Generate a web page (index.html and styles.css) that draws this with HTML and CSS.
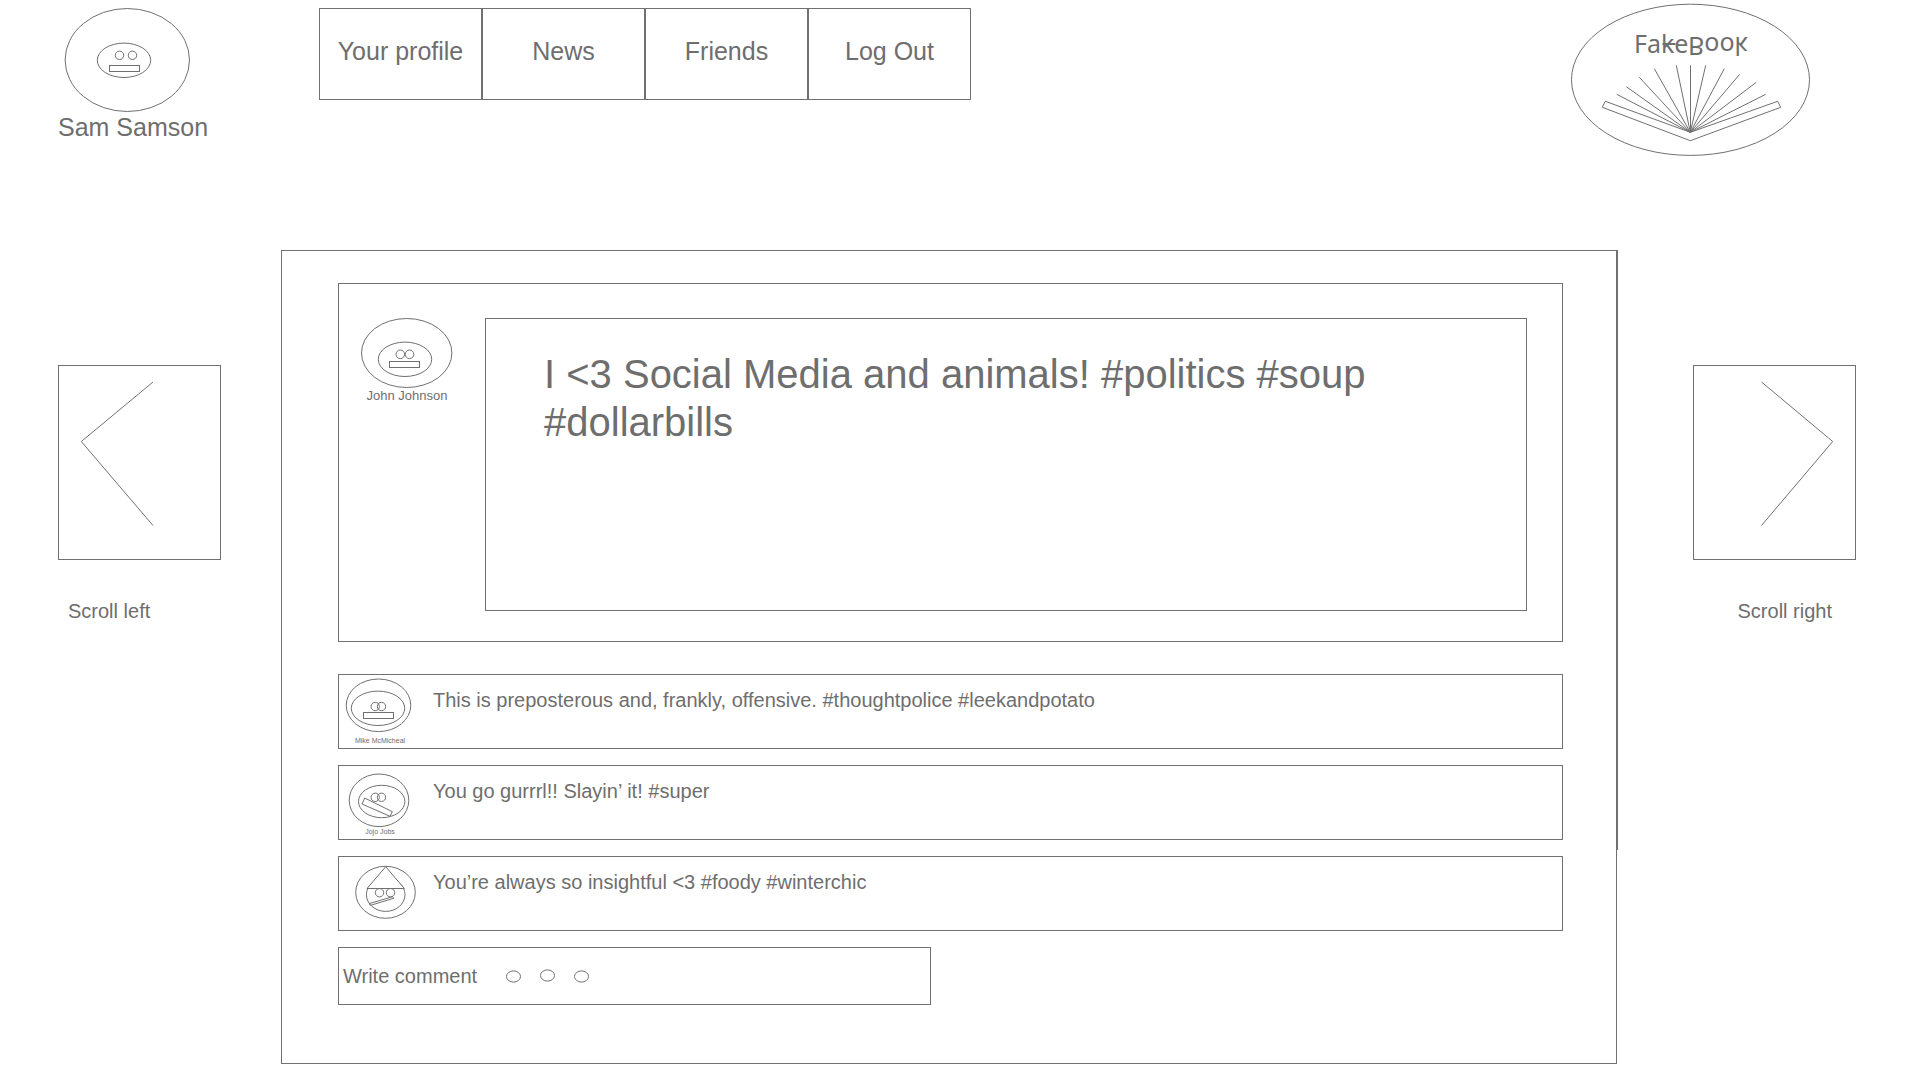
FILE: index.html
```html
<!DOCTYPE html>
<html lang="en">
<head>
<meta charset="utf-8">
<meta name="viewport" content="width=device-width, initial-scale=1">
<title>FakeBook</title>
<link rel="stylesheet" href="styles.css">
</head>
<body>
<header class="header">
  <div class="profile">
    <svg class="drawing" width="140" height="104" viewBox="0 0 140 104" aria-hidden="true">
      <ellipse cx="69.3" cy="52" rx="62.2" ry="51.5"/>
      <ellipse cx="66" cy="52.3" rx="26.7" ry="17.2"/>
      <circle cx="61.5" cy="47.3" r="4.2"/>
      <circle cx="74.5" cy="47.3" r="4.2"/>
      <rect x="51.5" y="57.5" width="30" height="6"/>
    </svg>
    <span class="profile-name">Sam Samson</span>
  </div>
  <nav class="nav">
    <a class="nav-link" href="#profile">Your profile</a>
    <a class="nav-link" href="#news">News</a>
    <a class="nav-link" href="#friends">Friends</a>
    <a class="nav-link" href="#logout">Log Out</a>
  </nav>
  <a class="logo" href="#home" aria-label="FakeBook">
    <svg class="drawing" width="242" height="160" viewBox="0 0 242 160" aria-hidden="true">
      <ellipse cx="120.5" cy="79.8" rx="119" ry="75.6"/>
      <text class="logo-text" x="64" y="53">Fake</text>
      <path class="logo-strike" d="M92.5 44h13"/>
      <text class="logo-text" x="118" y="-37" transform="scale(1 -1)">Book</text>
      <path d="M120.3 132.3L46.7 94.3M120.3 132.3L56.3 86.7M120.3 132.3L69.3 77.3M120.3 132.3L84.3 68.7M120.3 132.3L106.3 65.3M120.5 132.3V65.3M120.3 132.3L135.7 65.3M120.3 132.3L154.3 68.7M120.3 132.3L169.7 74.3M120.3 132.3L186.3 82.3M120.3 132.3L195.7 94.3"/>
      <path d="M35.3 101.3L32.3 107.3L120.3 140.7L210.7 107.3L207.7 101.3L120.3 132.3Z"/>
    </svg>
  </a>
</header>

<main class="page">
  <div class="scroll">
    <button class="scroll-button" type="button" aria-labelledby="scroll-left">
      <svg class="drawing" width="161" height="193" viewBox="0 0 161 193" aria-hidden="true"><path d="M94 16L22.3 75.5L94 159.5"/></svg>
    </button>
    <span class="scroll-label" id="scroll-left">Scroll left</span>
  </div>

  <section class="feed">
    <article class="post">
      <div class="post-author">
        <svg class="drawing" width="94" height="70" viewBox="0 0 94 70" aria-hidden="true">
          <ellipse cx="46.7" cy="35" rx="45.2" ry="34.5"/>
          <ellipse cx="45" cy="41.3" rx="26.7" ry="17.2"/>
          <circle cx="40.3" cy="36.3" r="4.3"/>
          <circle cx="49.5" cy="36.3" r="4.3"/>
          <rect x="29.5" y="43.5" width="30" height="6"/>
        </svg>
        <span class="post-name">John Johnson</span>
      </div>
      <p class="post-text">I &lt;3 Social Media and animals! #politics #soup #dollarbills</p>
    </article>

    <div class="comments">
      <article class="comment">
        <div class="comment-author">
          <svg class="drawing" width="82" height="62" viewBox="0 0 82 62" aria-hidden="true">
            <ellipse cx="39.5" cy="30.3" rx="32.3" ry="26.3"/>
            <ellipse cx="39" cy="33.3" rx="26.7" ry="17.2"/>
            <circle cx="36.2" cy="31.5" r="4.2"/>
            <circle cx="42.5" cy="31.5" r="4.2"/>
            <rect x="24.5" y="37.5" width="30" height="6"/>
          </svg>
          <span class="comment-name">Mike McMicheal</span>
        </div>
        <p class="comment-text">This is preposterous and, frankly, offensive. #thoughtpolice #leekandpotato</p>
      </article>
      <article class="comment">
        <div class="comment-author">
          <svg class="drawing" width="82" height="62" viewBox="0 0 82 62" aria-hidden="true">
            <ellipse cx="40" cy="34.3" rx="29.8" ry="26.3"/>
            <ellipse cx="42.7" cy="35.5" rx="23.2" ry="16.2"/>
            <circle cx="36.2" cy="31.3" r="4.2"/>
            <circle cx="42.5" cy="31.3" r="4.2"/>
            <path d="M25.7 32L53.3 45.7L51 50.3L23 38Z"/>
          </svg>
          <span class="comment-name">Jojo Jobs</span>
        </div>
        <p class="comment-text">You go gurrrl!! Slayin’ it! #super</p>
      </article>
      <article class="comment">
        <div class="comment-author">
          <svg class="drawing" width="82" height="62" viewBox="0 1 82 62" aria-hidden="true">
            <ellipse cx="46.5" cy="36.3" rx="29.8" ry="26"/>
            <ellipse cx="46.7" cy="38.7" rx="19.3" ry="16.7"/>
            <path class="hat" d="M46.7 10.7L28 32.5H65.3Z"/>
            <circle cx="40.5" cy="36.7" r="4.2"/>
            <circle cx="51.5" cy="36.7" r="4.2"/>
            <path d="M30 47.7L53.7 40.7L54.7 42.3L31.7 49.3Z"/>
          </svg>
        </div>
        <p class="comment-text">You’re always so insightful &lt;3 #foody #winterchic</p>
      </article>
      <form class="write">
        <label class="write-label" for="comment">Write comment</label>
        <svg class="drawing" width="85" height="14" viewBox="0 0 85 14" aria-hidden="true">
          <ellipse cx="8.5" cy="7.5" rx="7" ry="5.6"/>
          <ellipse cx="42.5" cy="6.5" rx="7" ry="5.6"/>
          <ellipse cx="76.5" cy="7.5" rx="7" ry="5.6"/>
        </svg>
        <input class="write-input" id="comment" type="text">
      </form>
    </div>
  </section>

  <div class="scroll scroll-end">
    <button class="scroll-button" type="button" aria-labelledby="scroll-right">
      <svg class="drawing" width="161" height="193" viewBox="0 0 161 193" aria-hidden="true"><path d="M67.5 16L138.7 75.5L67.5 159.5"/></svg>
    </button>
    <span class="scroll-label" id="scroll-right">Scroll right</span>
  </div>
</main>
</body>
</html>
```
FILE: styles.css
```css
* {
  box-sizing: border-box;
}

body {
  margin: 0;
  background: #fff;
  color: #6e6e6e;
  font-family: "Liberation Sans", Arial, Helvetica, sans-serif;
  font-size: 20px;
  line-height: 24px;
}

.drawing {
  display: block;
  flex: none;
  overflow: visible;
  fill: none;
  stroke: #707070;
  stroke-width: 1;
}

/* Header */

.header {
  display: flex;
  align-items: flex-start;
  padding: 0 108px 0 58px;
}

.profile {
  display: flex;
  flex-direction: column;
  gap: 1px;
  width: 261px;
  padding-top: 8px;
}

.profile-name {
  font-size: 25px;
  line-height: 28px;
}

.nav {
  display: grid;
  grid-template-columns: repeat(4, 163px);
  margin-top: 8px;
}

.nav-link {
  display: flex;
  align-items: center;
  justify-content: center;
  height: 92px;
  padding-bottom: 6px;
  border: 1px solid #707070;
  color: inherit;
  font-size: 25px;
  line-height: 28px;
  text-decoration: none;
}

.logo {
  margin-left: auto;
}

.logo-text {
  fill: #6e6e6e;
  stroke: none;
  font-family: "Noto Sans", "Open Sans", sans-serif;
  font-size: 25px;
}

.logo-strike {
  stroke-width: 2;
}

/* Feed with the scroll buttons beside it */

.page {
  display: flex;
  align-items: flex-start;
  padding: 90px 64px 0 58px;
}

.scroll {
  display: flex;
  flex-direction: column;
  flex: none;
  gap: 39px;
  width: 163px;
  margin-top: 115px;
}

.scroll-button {
  height: 195px;
  padding: 0;
  border: 1px solid #707070;
  background: none;
}

.scroll-label {
  padding: 0 24px 0 10px;
}

.scroll-end {
  text-align: right;
}

.feed {
  position: relative;
  flex: 1;
  min-height: 814px;
  margin: 0 76px 0 60px;
  padding: 32px 53px 58px 56px;
  border: 1px solid #707070;
}

/* Scroll bar running down the outer edge of the feed */
.feed::after {
  content: "";
  position: absolute;
  top: -1px;
  left: 100%;
  width: 2px;
  height: 600px;
  background: #707070;
}

.post {
  display: flex;
  gap: 31px;
  margin-bottom: 32px;
  padding: 34px 35px 30px 21px;
  border: 1px solid #707070;
}

.post-author {
  display: flex;
  flex-direction: column;
  flex: none;
  width: 94px;
  text-align: center;
}

.post-name {
  font-size: 13px;
  line-height: 15px;
}

.post-text {
  flex: 1;
  min-height: 293px;
  margin: 0;
  padding: 31px 58px;
  border: 1px solid #707070;
  font-size: 40px;
  line-height: 48px;
}

.comments {
  display: flex;
  flex-direction: column;
  gap: 16px;
}

.comment {
  display: flex;
  gap: 12px;
  min-height: 75px;
  border: 1px solid #707070;
}

.comment-author {
  display: flex;
  flex-direction: column;
  flex: none;
  width: 82px;
  text-align: center;
}

.comment-name {
  font-size: 7px;
  line-height: 8px;
}

.comment-text {
  margin: 0;
  padding-top: 13px;
}

.hat {
  fill: #fff;
}

.write {
  display: flex;
  align-items: center;
  gap: 28px;
  width: 593px;
  height: 58px;
  padding-left: 4px;
  border: 1px solid #707070;
}

.write-input {
  flex: 1;
  min-width: 0;
  height: 100%;
  padding: 0;
  border: 0;
  outline: 0;
  background: none;
  color: inherit;
  font: inherit;
}
```
